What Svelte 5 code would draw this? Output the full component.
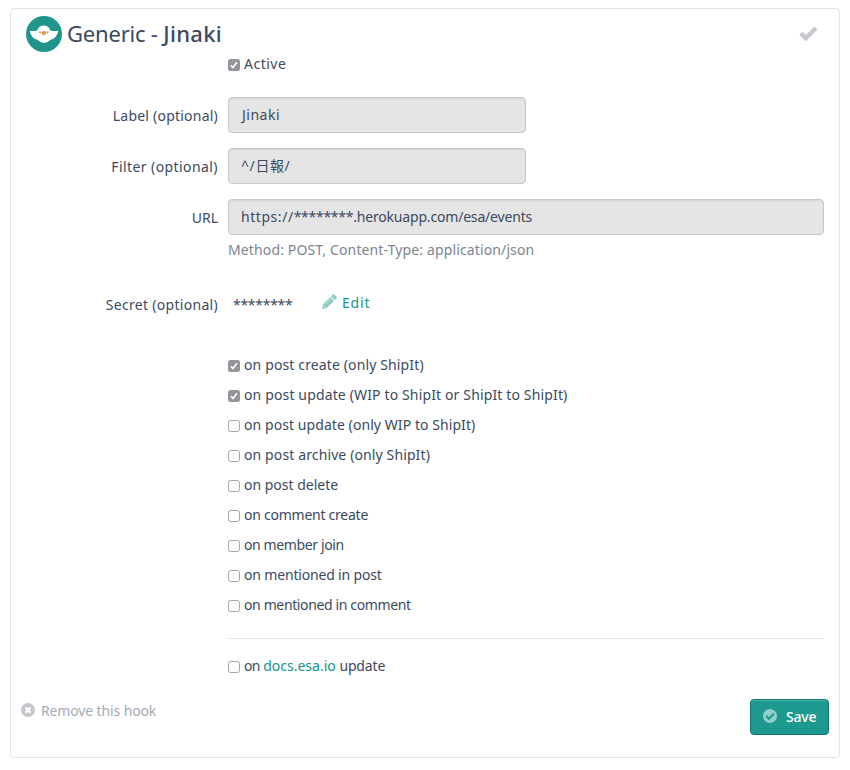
<script>
  let events = $state([
    { label: 'on post create (only ShipIt)', checked: true, tracking: 0.13 },
    { label: 'on post update (WIP to ShipIt or ShipIt to ShipIt)', checked: true, tracking: 0.14 },
    { label: 'on post update (only WIP to ShipIt)', checked: false, tracking: 0.07 },
    { label: 'on post archive (only ShipIt)', checked: false, tracking: 0.12 },
    { label: 'on post delete', checked: false, tracking: 0 },
    { label: 'on comment create', checked: false, tracking: -0.25 },
    { label: 'on member join', checked: false, tracking: -0.38 },
    { label: 'on mentioned in post', checked: false, tracking: -0.17 },
    { label: 'on mentioned in comment', checked: false, tracking: -0.37 },
  ]);
  let active = $state(true);
  let docs = $state(false);
</script>

{#snippet box(checked)}
  <svg class="box" viewBox="0 0 12 12" aria-hidden="true">
    {#if checked}
      <rect width="12" height="12" rx="2.5" fill="#94949a" />
      <path d="M3 6.4 5 8.6 9 3.2" fill="none" stroke="#fff" stroke-width="1.6" />
    {:else}
      <rect x=".5" y=".5" width="11" height="11" rx="2.3" fill="#fff" stroke="#a5a5a8" />
    {/if}
  </svg>
{/snippet}

<main class="card">
  <header>
    <svg class="logo" viewBox="0 0 36 36" aria-hidden="true">
      <circle cx="18" cy="18" r="18" fill="#20958b" />
      <path d="M3.8 14.8 Q8 15.4 11.2 14.4 C12.2 11.2 14.7 9.4 17.8 9.4 S23.4 11.2 24.4 14.4 Q28 15.4 32.2 14.8 C31.4 19.4 29 22.8 25 23.6 Q21.5 27 18 27 T11 23.6 C7 22.8 4.6 19.4 3.8 14.8Z" fill="#fff" />
      <circle cx="14.2" cy="16.4" r="1.1" fill="#aaa09c" /><circle cx="21.4" cy="16.4" r="1.1" fill="#aaa09c" />
      <circle cx="17.8" cy="17" r="2.1" fill="#dc9139" />
    </svg>
    <h1>Generic - <b>Jinaki</b></h1>
    <svg class="tick" viewBox="0 0 19 15" aria-hidden="true">
      <path d="M1.8 7.4 6.8 12.2 17 2" fill="none" stroke="#c5c9cd" stroke-width="4.4" />
    </svg>
  </header>

  <button class="check active" onclick={() => (active = !active)}>{@render box(active)}<span>Active</span></button>

  <div class="row">
    <label for="label" class="for-label">Label (optional)</label>
    <div class="field half" id="label"><span class="name">Jinaki</span></div>
  </div>
  <div class="row">
    <label for="filter" class="for-filter">Filter (optional)</label>
    <div class="field half" id="filter"><span class="pattern">^/日報/</span></div>
  </div>
  <div class="row url">
    <label for="url">URL</label>
    <div class="field" id="url"><span class="scheme">https://</span><span class="masked">********</span><span class="host">.herokuapp.com/esa/events</span></div>
  </div>
  <p class="help">Method: POST, Content-Type: application/json</p>

  <div class="row secret">
    <label for="secret" class="for-secret">Secret (optional)</label>
    <span class="stars masked" id="secret">********</span>
    <a class="edit" href="#edit">
      <svg viewBox="0 0 15 15" aria-hidden="true">
        <path d="M0 15 1 10.3 8.2 3.1 11.9 6.8 4.7 14ZM9 2.3 10.6.7Q11.5-.2 12.4.7L14.3 2.6Q15.2 3.5 14.3 4.4L12.7 6Z" fill="#8dcac5" />
        <path d="M1.3 11.6 3.4 13.7M3.2 10.2 8.6 4.8" stroke="#fff" stroke-width=".7" />
      </svg>
      <span>Edit</span>
    </a>
  </div>

  <div class="events">
    {#each events as event}
      <button class="check" onclick={() => (event.checked = !event.checked)}>{@render box(event.checked)}<span style="letter-spacing: {event.tracking}px">{event.label}</span></button>
    {/each}
  </div>
  <hr />
  <button class="check" onclick={() => (docs = !docs)}>{@render box(docs)}<span><span class="on">on</span> <em>docs.esa.io</em> <span class="update">update</span></span></button>

  <footer>
    <a class="remove" href="#remove">
      <svg viewBox="0 0 14 14" aria-hidden="true">
        <circle cx="7" cy="7" r="7" fill="#c3c6cb" />
        <path d="m4.4 4.4 5.2 5.2m0-5.2-5.2 5.2" stroke="#fff" stroke-width="2.2" />
      </svg>
      <span>Remove this hook</span>
    </a>
    <button class="save">
      <svg viewBox="0 0 14 14" aria-hidden="true">
        <circle cx="7" cy="7" r="7" fill="#94d0cb" />
        <path d="m3.2 7 2.8 2.7 4.9-4.9" fill="none" stroke="#1e998f" stroke-width="2.1" />
      </svg>
      <span>Save</span>
    </button>
  </footer>
</main>

<style>
  :global(body) { background: #fff; }
  .card {
    box-sizing: border-box; width: 830px; height: 750px; margin: 8px 0 0 10px;
    border: 1px solid #e2e4e6; border-radius: 4px; overflow: hidden;
    font: 14px/20px "Noto Sans", "Noto Sans CJK JP", sans-serif; color: #3c4a60;
  }
  span, label, h1, p { white-space: nowrap; }
  svg { display: block; flex: none; }
  header { display: flex; height: 45px; padding: 7px 20px 0 15px; box-sizing: border-box; }
  .logo { width: 36px; height: 36px; }
  h1 { margin: 2px 0 0 5px; font-size: 22px; line-height: 30px; font-weight: 400; flex: 1; letter-spacing: -.2px; }
  h1 b { font-weight: 500; letter-spacing: .3px; }
  .tick { width: 19px; height: 15px; margin: 10px 1px 0 0; }
  button { font: inherit; color: inherit; border: 0; background: none; padding: 0; text-align: left; }
  .check { display: flex; align-items: center; gap: 4px; height: 20px; margin-left: 217px; }
  .check.active { margin-bottom: 23px; letter-spacing: .5px; }
  .box { width: 12px; height: 12px; margin-top: 1px; }
  .row { display: flex; height: 36px; margin-bottom: 15px; }
  .row.url { margin-bottom: 5px; }
  label { width: 207px; margin-right: 10px; padding-top: 9px; text-align: right; flex: none; }
  .for-label { letter-spacing: .22px; }
  .for-filter { letter-spacing: .42px; }
  .for-secret { letter-spacing: .3px; }
  .field {
    box-sizing: border-box; width: 596px; height: 36px; padding: 7px 12px; flex: none;
    border: 1px solid #c9c9ca; border-radius: 4px; background: #e5e5e5; box-shadow: inset 0 1px 2px #00000012;
  }
  .half { width: 298px; }
  .name { letter-spacing: .5px; margin-left: 1px; }
  .pattern { letter-spacing: .6px; }
  .scheme { letter-spacing: .55px; }
  .masked { letter-spacing: -.28px; }
  .host { letter-spacing: -.18px; }
  .help { margin: 0 0 0 217px; color: #7c8491; letter-spacing: .13px; }
  .secret { margin: 26px 0 33px; height: 36px; }
  .stars { margin: 9px 0 0 5px; width: 89px; }
  .edit { display: flex; margin-top: 7px; gap: 5px; height: 20px; text-decoration: none; color: #159489; letter-spacing: .8px; }
  .edit svg { width: 15px; height: 15px; margin-top: 1px; }
  .events { display: flex; flex-direction: column; gap: 10px; }
  hr { margin: 23px 15px 17px 217px; border: 0; border-top: 1px solid #e3e4e6; }
  .on { letter-spacing: -.8px; }
  em { font-style: normal; color: #159489; }
  .update { letter-spacing: -.15px; }
  footer { display: flex; justify-content: space-between; margin: 23px 10px 0; }
  .remove { display: flex; gap: 6px; margin-top: 2px; height: 20px; color: #a5aab3; text-decoration: none; letter-spacing: -.13px; }
  .remove svg { width: 14px; height: 14px; margin-top: 2px; }
  .save {
    display: flex; align-items: center; gap: 9px; width: 79px; height: 36px; box-sizing: border-box; padding: 0 12px;
    color: #fff; font-weight: 500; letter-spacing: -.2px; border: 1px solid #13756d; border-radius: 4px; background: #1e998f; box-shadow: inset 0 1px #4bb0a8;
  }
  .save svg { width: 14px; height: 14px; margin-top: -2px; }
</style>
